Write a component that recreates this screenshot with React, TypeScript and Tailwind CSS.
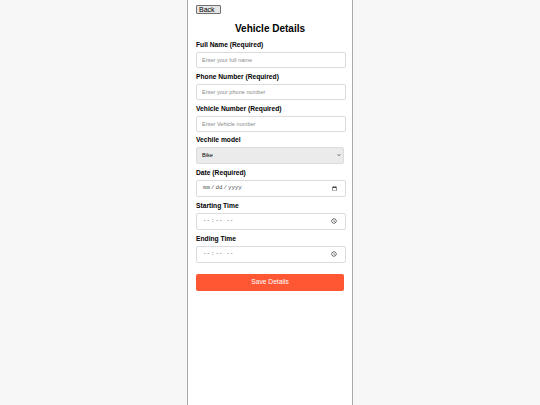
import { useState } from "react";

const labelCls = "block text-[6.7px] leading-[8px] font-bold text-black mb-[3px]";
const inputCls =
  "block w-[150px] h-[16px] px-[5px] text-[5.6px] border border-[#dcdcdc] rounded-[2px] bg-white text-black placeholder:text-[#8a8a8a] outline-none";
const pickerCls =
  "block w-[150px] h-[17px] px-[5px] text-[5.8px] border border-[#dcdcdc] rounded-[2px] bg-white text-[#555] outline-none";

function Field({ label, children }: { label: string; children: React.ReactNode }) {
  return (
    <div className="mb-[5px]">
      <label className={labelCls}>{label}</label>
      {children}
    </div>
  );
}

export default function App() {
  const [model, setModel] = useState("Bike");

  return (
    <div
      className="min-h-screen w-full bg-[#f7f7f7] flex justify-center"
      style={{ fontFamily: '"Liberation Sans", Arial, sans-serif' }}
    >
      <div className="w-[166px] min-h-[405px] bg-white border-x border-[#a9a9a9] px-[8px] pt-[5px]">
        <button className="block h-[9px] w-[25px] text-[7px] leading-[7px] text-black bg-[#e6e6e6] border border-[#6f6f6f] rounded-[1px] text-left pl-[2px]">
          Back
        </button>
        <h2 className="text-[10px] leading-[12px] font-bold text-center text-black mt-[9px] mb-[6px]">
          Vehicle Details
        </h2>

        <form onSubmit={(e) => e.preventDefault()}>
          <Field label="Full Name (Required)">
            <input type="text" placeholder="Enter your full name" className={inputCls} />
          </Field>
          <Field label="Phone Number (Required)">
            <input type="tel" placeholder="Enter your phone number" className={inputCls} />
          </Field>
          <div className="mb-[4px]">
            <label className={labelCls}>Vehicle Number (Required)</label>
            <input type="text" placeholder="Enter Vehicle number" className={inputCls} />
          </div>
          <Field label="Vechile model">
            <div className="relative w-[148px]">
              <select
                value={model}
                onChange={(e) => setModel(e.target.value)}
                className="block w-[148px] h-[17px] px-[5px] text-[5.6px] bg-[#ebebeb] border border-[#dcdcdc] rounded-[2px] text-black appearance-none outline-none"
              >
                <option>Bike</option>
                <option>Car</option>
                <option>Truck</option>
              </select>
              <svg
                className="absolute right-[3px] top-[6px] w-[4px] h-[4px] pointer-events-none"
                viewBox="0 0 10 10"
                fill="none"
                stroke="#222"
                strokeWidth="2"
              >
                <path d="M2 3.5 L5 6.5 L8 3.5" />
              </svg>
            </div>
          </Field>
          <Field label="Date (Required)">
            <input type="date" className={pickerCls + " h-[16px]"} style={{ fontFamily: '"Liberation Mono", monospace' }} />
          </Field>
          <Field label="Starting Time">
            <input type="time" className={pickerCls} style={{ fontFamily: '"Liberation Mono", monospace' }} />
          </Field>
          <Field label="Ending Time">
            <input type="time" className={pickerCls} style={{ fontFamily: '"Liberation Mono", monospace' }} />
          </Field>
          <button
            type="submit"
            className="mt-[11px] block w-[148px] h-[17px] bg-[#ff5733] text-white text-[6.7px] rounded-[2px]"
          >
            Save Details
          </button>
        </form>
      </div>
    </div>
  );
}
